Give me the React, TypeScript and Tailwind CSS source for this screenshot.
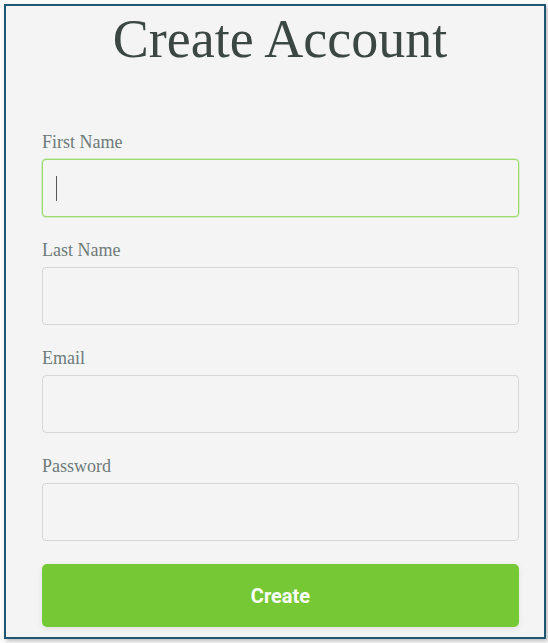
import React, { useState } from 'react';

const fields = [
  { id: 'first', label: 'First Name', type: 'text' },
  { id: 'last', label: 'Last Name', type: 'text' },
  { id: 'email', label: 'Email', type: 'email' },
  { id: 'password', label: 'Password', type: 'password' },
];

const App: React.FC = () => {
  const [focused, setFocused] = useState('first');

  return (
    <div className="w-[548px] h-[643px] bg-[#fbfbfb] pt-[4px] pl-[4px]">
      <div className="w-[542px] h-[635px] border-2 border-[#1d5773] bg-[#f4f4f4] shadow-[2px_2px_4px_rgba(0,0,0,0.25)] pl-[36px] pr-[25px] pt-[6px]">
        {/* Title */}
        <h1 className="text-center text-[54px] leading-[54px] text-[#3b4743] font-['Liberation_Serif',serif] pr-[1px]">
          Create Account
        </h1>

        {/* Fields */}
        <form className="mt-[66px]" onSubmit={(e) => e.preventDefault()}>
          {fields.map((f) => (
            <div key={f.id} className="mb-[23px] last:mb-[21px]">
              <label
                htmlFor={f.id}
                className="block h-[18px] leading-[18px] text-[18px] text-[#6d7b79] font-['Liberation_Serif',serif] mb-[9px] pt-px"
              >
                {f.label}
              </label>
              <div
                className={`relative h-[58px] rounded-[4px] border bg-[#f4f4f4] ${
                  focused === f.id ? 'border-[#9cdb72] shadow-[0_0_0_0.5px_#b6e59a]' : 'border-[#d6d6d2]'
                }`}
              >
                <input
                  id={f.id}
                  type={f.type}
                  onFocus={() => setFocused(f.id)}
                  className="w-full h-full bg-transparent outline-none px-[13px] text-[18px] text-[#3b4743] font-['Liberation_Serif',serif]"
                />
                {focused === f.id && (
                  <span className="absolute left-[13px] top-[16px] w-px h-[25px] bg-[#555]" />
                )}
              </div>
            </div>
          ))}

          <button
            type="submit"
            className="w-full h-[63px] rounded-[5px] bg-[#76c934] text-white text-[20px] font-bold font-['Roboto',sans-serif] shadow-[0_2px_6px_rgba(0,0,0,0.08)]"
          >
            Create
          </button>
        </form>
      </div>
    </div>
  );
};

export default App;
